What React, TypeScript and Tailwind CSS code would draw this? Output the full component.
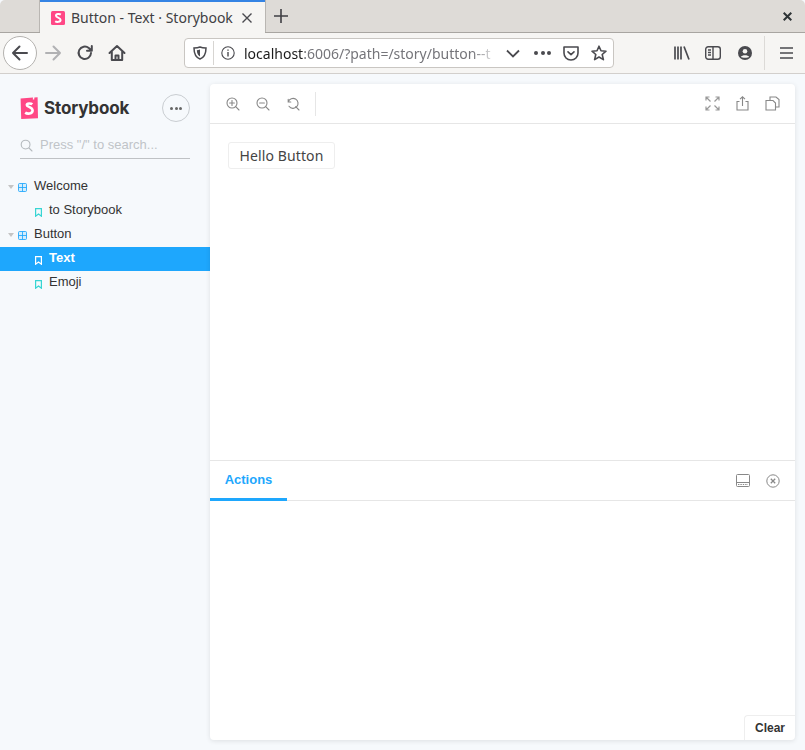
const chrome = "font-['Noto_Sans',sans-serif]";

function Glyph({ size = 18, color = "#4a4a4f", sw = 2, children, className = "" }: { size?: number; color?: string; sw?: number; children: React.ReactNode; className?: string }) {
  return (
    <svg width={size} height={size} viewBox="0 0 18 18" fill="none" stroke={color} strokeWidth={sw} strokeLinecap="round" strokeLinejoin="round" className={className}>
      {children}
    </svg>
  );
}

function Logo({ w, h }: { w: number; h: number }) {
  return (
    <svg width={w} height={h} viewBox="0 0 18 22">
      <path d="M0.6 1.4 L13 0.6 L12.8 2.6 L14.2 2.5 L14.4 0.5 L17.6 0.3 L18 21.2 L1.2 22 Z" fill="#ff4785" />
      <path d="M12.3 7.3 C11 6.2 6.8 5.9 6.8 8 C6.8 10.2 12.6 9.6 12.6 13.5 C12.6 17 7.3 17.2 5.2 15.6" fill="none" stroke="#fff" strokeWidth="2.6" />
    </svg>
  );
}

function Bookmark({ color }: { color: string }) {
  return (
    <svg width="7" height="9" viewBox="0 0 7 9" fill="none" stroke={color} strokeWidth="1.2" className="mt-[2px]">
      <path d="M0.6 0.6 H6.4 V8.2 L3.5 6 L0.6 8.2 Z" />
    </svg>
  );
}

function Folder() {
  return (
    <svg width="9" height="9" viewBox="0 0 9 9" className="mt-[1px]">
      <rect x="0.5" y="0.5" width="8" height="8" rx="1" fill="#1ea7fd" fillOpacity="0.15" stroke="#1ea7fd" strokeOpacity="0.85" />
      <path d="M4.5 0.5 V8.5 M0.5 4.5 H8.5" stroke="#1ea7fd" strokeOpacity="0.85" strokeWidth="1" />
    </svg>
  );
}

function Group({ label }: { label: string }) {
  return (
    <div className="flex h-6 items-center pl-[8px] text-[#333]">
      <span className="h-0 w-0 border-x-[3px] border-t-[4px] border-x-transparent border-t-[#c4c4c4]" />
      <span className="ml-[4px] flex"><Folder /></span>
      <span className="ml-[7px] pb-[2px]">{label}</span>
    </div>
  );
}

function Story({ label, active }: { label: string; active?: boolean }) {
  return (
    <div className={active ? "flex h-6 items-center bg-[#1ea7fd] pl-[35px] font-bold text-white" : "flex h-6 items-center pl-[35px] text-[#333]"}>
      <Bookmark color={active ? "#ffffff" : "#37d5d3"} />
      <span className="ml-[7px] pb-[2px]">{label}</span>
    </div>
  );
}

function Sidebar() {
  return (
    <aside className="w-[210px] shrink-0 font-['Liberation_Sans',sans-serif] text-[13px]">
      <div className="mt-[20px] flex h-[28px] items-center justify-between pl-[20px] pr-[20px]">
        <div className="flex items-center">
          <Logo w={18} h={22} />
          <span className="ml-[6px] pt-[2px] font-['Inter',sans-serif] text-[17px] font-bold tracking-[-0.15px] text-[#333]">Storybook</span>
        </div>
        <div className="flex h-[28px] w-[28px] items-center justify-center gap-[1.5px] rounded-full border border-[#c9cdd1]">
          <span className="h-[3px] w-[3px] rounded-full bg-[#666]" />
          <span className="h-[3px] w-[3px] rounded-full bg-[#666]" />
          <span className="h-[3px] w-[3px] rounded-full bg-[#666]" />
        </div>
      </div>
      <div className="mx-[20px] mt-[10px] flex h-[27px] items-center border-b border-[#bfc2c5] text-[#c0c4c8]">
        <svg width="13" height="13" viewBox="0 0 13 13" fill="none" stroke="#b5babe" strokeWidth="1.1" strokeLinecap="round">
          <circle cx="5.6" cy="5.6" r="4.4" />
          <path d="M9 9 L12 12" />
        </svg>
        <span className="ml-[7px]">Press "/" to search...</span>
      </div>
      <div className="mt-[16px]">
        <Group label="Welcome" />
        <Story label="to Storybook" />
        <Group label="Button" />
        <Story label="Text" active />
        <Story label="Emoji" />
      </div>
    </aside>
  );
}

function Mag({ mark }: { mark: "plus" | "minus" | "reset" }) {
  return (
    <svg width="14" height="14" viewBox="0 0 14 14" fill="none" stroke="#888" strokeWidth="1.1" strokeLinecap="round">
      {mark === "reset" ? <path d="M2.2 2.4 V5 H4.8 M2.3 4.8 A5 5 0 1 1 3 9.3" /> : <circle cx="6" cy="6" r="5" />}
      <path d="M9.7 9.7 L13 13" />
      {mark !== "reset" && <path d="M3.6 6 H8.4" />}
      {mark === "plus" && <path d="M6 3.6 V8.4" />}
    </svg>
  );
}

function Panel() {
  return (
    <main className="mb-[10px] mr-[10px] mt-[10px] flex min-w-0 flex-1 flex-col rounded-[4px] bg-white shadow-[0_1px_5px_rgba(0,0,0,0.1)]">
      <div className="flex h-[40px] shrink-0 items-center border-b border-[#e6e6e6] pl-[16px] pr-[15px]">
        <div className="flex items-center gap-[16px]">
          <Mag mark="plus" />
          <Mag mark="minus" />
          <Mag mark="reset" />
        </div>
        <div className="ml-[15px] h-[24px] w-px bg-[#e6e6e6]" />
        <div className="ml-auto flex items-center gap-[15px]">
          <svg width="15" height="15" viewBox="0 0 15 15" fill="none" stroke="#999" strokeWidth="1.2">
            <path d="M1 4.5 V1 H4.5 M1 1 L5.5 5.5 M10.5 1 H14 V4.5 M14 1 L9.5 5.5 M1 10.5 V14 H4.5 M1 14 L5.5 9.5 M10.5 14 H14 V10.5 M14 14 L9.5 9.5" />
          </svg>
          <svg width="15" height="15" viewBox="0 0 15 15" fill="none" stroke="#888" strokeWidth="1.1">
            <path d="M4.5 5.5 H2 V14 H13 V5.5 H10.5 M7.5 10 V1 M5 3.2 L7.5 0.8 L10 3.2" />
          </svg>
          <svg width="15" height="15" viewBox="0 0 15 15" fill="none" stroke="#888" strokeWidth="1.1">
            <path d="M5 4 V1 H11 L14 3.5 V11 H10.5" />
            <path d="M1 4.5 H8 L10.5 7 V14 H1 Z" />
          </svg>
        </div>
      </div>
      <div className="h-[336px] shrink-0 p-[18px]">
        <div className={`flex h-[27px] w-[107px] items-center justify-center rounded-[3px] border border-[#eee] text-[14px] tracking-[0.1px] text-[#444] ${chrome}`}>Hello Button</div>
      </div>
      <div className="flex h-[41px] shrink-0 items-stretch border-y border-[#e6e6e6] pr-[15px]">
        <div className="-mb-px flex w-[77px] items-center justify-center border-b-[3px] border-[#1ea7fd] pt-[1px] font-['Liberation_Sans',sans-serif] text-[13px] font-bold text-[#1ea7fd]">Actions</div>
        <div className="ml-auto flex items-center gap-[16px]">
          <svg width="14" height="13" viewBox="0 0 14 13" fill="none" stroke="#888" strokeWidth="1">
            <rect x="0.5" y="0.5" width="13" height="12" rx="1" />
            <path d="M0.5 8.5 H13.5" />
            <path d="M2 10.5 H12" strokeDasharray="1.4 1" />
          </svg>
          <svg width="14" height="14" viewBox="0 0 14 14" fill="none" stroke="#888" strokeWidth="1">
            <circle cx="7" cy="7" r="6.2" />
            <path d="M4.8 4.8 L9.2 9.2 M9.2 4.8 L4.8 9.2" strokeWidth="1.3" />
          </svg>
        </div>
      </div>
      <div className="flex flex-1 items-end justify-end">
        <div className="flex h-[25px] w-[51px] items-center justify-center rounded-tl-[4px] border-l border-t border-[#eee] font-['Liberation_Sans',sans-serif] text-[12px] font-bold text-[#333]">Clear</div>
      </div>
    </main>
  );
}

function BrowserChrome() {
  return (
    <header className={`shrink-0 ${chrome}`}>
      <div className="flex h-[33px] items-stretch rounded-t-[5px] border-b border-[#a8a5a1] bg-[#dedbd7]">
        <div className="w-[40px] border-r border-[#b9b6b2]" />
        <div className="-mb-px flex w-[225px] items-center border-t-[2px] border-[#3584e4] bg-[#f6f5f3] pl-[11px] pr-[13px] text-[14px] text-[#3f3f44]">
          <svg width="14" height="14" viewBox="0 0 14 14">
            <rect width="14" height="14" rx="1.5" fill="#ff4785" />
            <path d="M9.8 3.6 C8.8 2.8 5 2.6 5 4.7 C5 7 9.6 6.3 9.6 9 C9.6 11.2 5.6 11.3 4.2 10.2" fill="none" stroke="#fff" strokeWidth="2" />
          </svg>
          <span className="ml-[6px] whitespace-nowrap">Button - Text · Storybook</span>
          <svg width="10" height="10" viewBox="0 0 10 10" className="ml-auto" stroke="#4a4a4f" strokeWidth="1.4">
            <path d="M0.5 0.5 L9.5 9.5 M9.5 0.5 L0.5 9.5" />
          </svg>
        </div>
        <div className="flex w-[31px] items-center justify-center border-l border-[#b9b6b2]">
          <svg width="14" height="14" viewBox="0 0 14 14" stroke="#3f3f44" strokeWidth="1.6">
            <path d="M7 0 V14 M0 7 H14" />
          </svg>
        </div>
        <div className="ml-auto flex w-[36px] items-center justify-center">
          <svg width="9" height="9" viewBox="0 0 9 9" stroke="#2e3436" strokeWidth="2">
            <path d="M0.7 0.7 L8.3 8.3 M8.3 0.7 L0.7 8.3" />
          </svg>
        </div>
      </div>
      <div className="flex h-[41px] items-center border-b border-[#d2cfcc] bg-[#f6f5f3]">
        <div className="ml-[3px] flex h-[34px] w-[34px] items-center justify-center rounded-full border border-[#b4b2af] bg-white">
          <Glyph>
            <path d="M16 9 H2 M8.5 2.5 L2 9 L8.5 15.5" />
          </Glyph>
        </div>
        <Glyph color="#b1b1b3" className="ml-[7px]">
          <path d="M2 9 H16 M9.5 2.5 L16 9 L9.5 15.5" />
        </Glyph>
        <Glyph className="ml-[14px]">
          <path d="M15 9 A6.2 6.2 0 1 1 12.8 4 L15.5 6.5 M15.8 2 V6.8 H11" />
        </Glyph>
        <Glyph className="ml-[14px]">
          <path d="M1.5 9 L9 2 L16.5 9 M3.8 7.5 V16 H14.2 V7.5" />
          <path d="M7.5 16 V11.5 H10.5 V16" />
        </Glyph>
        <div className="ml-[58px] flex h-[30px] w-[430px] items-center rounded-[4px] border border-[#c9c6c2] bg-white text-[14px]">
          <svg width="14" height="14" viewBox="0 0 14 14" className="ml-[8px]" fill="none" stroke="#4a4a4f" strokeWidth="1.5">
            <path d="M7 1 C8.8 1.8 11 2 13 2 C13 7.5 11 11.5 7 13 C3 11.5 1 7.5 1 2 C3 2 5.2 1.8 7 1 Z" />
            <path d="M7 3.5 V10.5 C5 9.5 4 7.5 3.8 4.2 C5 4.2 6 3.9 7 3.5 Z" fill="#4a4a4f" stroke="none" />
          </svg>
          <div className="ml-[6px] h-[24px] w-px bg-[#d7d5d2]" />
          <svg width="14" height="14" viewBox="0 0 14 14" className="ml-[7px]" fill="none" stroke="#4a4a4f" strokeWidth="1.1">
            <circle cx="7" cy="7" r="6.2" />
            <path d="M7 6 V10.4" strokeWidth="1.4" />
            <path d="M7 3.4 V4.8" strokeWidth="1.4" />
          </svg>
          <div className="ml-[9px] w-[254px] whitespace-nowrap [mask-image:linear-gradient(to_right,black_90%,transparent)]">
            <span className="text-[#1b1b1b]">localhost</span>
            <span className="text-[#75757a]">:6006/?path=/story/button--t</span>
          </div>
          <svg width="14" height="9" viewBox="0 0 14 9" className="ml-[8px]" fill="none" stroke="#4a4a4f" strokeWidth="1.8">
            <path d="M1 1.5 L7 7.5 L13 1.5" />
          </svg>
          <div className="ml-[14px] flex gap-[2.5px]">
            <span className="h-[4px] w-[4px] rounded-full bg-[#4a4a4f]" />
            <span className="h-[4px] w-[4px] rounded-full bg-[#4a4a4f]" />
            <span className="h-[4px] w-[4px] rounded-full bg-[#4a4a4f]" />
          </div>
          <svg width="16" height="15" viewBox="0 0 16 15" className="ml-[12px]" fill="none" stroke="#4a4a4f" strokeWidth="1.6" strokeLinecap="round" strokeLinejoin="round">
            <path d="M1 1 H15 V7 C15 11 12 14 8 14 C4 14 1 11 1 7 Z" />
            <path d="M5 5.8 L8 8.6 L11 5.8" />
          </svg>
          <svg width="16" height="16" viewBox="0 0 16 16" className="ml-[12px]" fill="none" stroke="#4a4a4f" strokeWidth="1.6" strokeLinejoin="round">
            <path d="M8 1.2 L10 5.8 L15 6.2 L11.2 9.5 L12.4 14.6 L8 12 L3.6 14.6 L4.8 9.5 L1 6.2 L6 5.8 Z" />
          </svg>
        </div>
        <svg width="16" height="14" viewBox="0 0 16 14" className="ml-[60px]" stroke="#4a4a4f" strokeWidth="1.7" fill="none">
          <path d="M1 0.5 V13.5 M4 0.5 V13.5 M7 0.5 V13.5 M10 0.5 L15 13.5" />
        </svg>
        <svg width="16" height="14" viewBox="0 0 16 14" className="ml-[15px]" stroke="#4a4a4f" strokeWidth="1.4" fill="none">
          <rect x="0.7" y="0.7" width="14.6" height="12.6" rx="2.5" />
          <path d="M8 0.7 V13.3 M3 4 H6 M3 6.5 H6 M3 9 H6" />
        </svg>
        <svg width="14" height="14" viewBox="0 0 14 14" className="ml-[17px]">
          <circle cx="7" cy="7" r="7" fill="#4a4a4f" />
          <circle cx="7" cy="5.2" r="2.3" fill="#f6f5f3" />
          <path d="M2.8 10.8 C4 8.6 10 8.6 11.2 10.8 C10 12.2 4 12.2 2.8 10.8 Z" fill="#f6f5f3" />
        </svg>
        <div className="ml-[12px] h-[34px] w-px bg-[#dcdad7]" />
        <svg width="13" height="12" viewBox="0 0 13 12" className="ml-[15px]" stroke="#4a4a4f" strokeWidth="1.5">
          <path d="M0 1 H13 M0 6 H13 M0 11 H13" />
        </svg>
      </div>
    </header>
  );
}

export default function App() {
  return (
    <div className="flex h-[750px] w-[805px] flex-col overflow-hidden bg-[#f6f9fc]">
      <BrowserChrome />
      <div className="flex min-h-0 flex-1">
        <Sidebar />
        <Panel />
      </div>
    </div>
  );
}
